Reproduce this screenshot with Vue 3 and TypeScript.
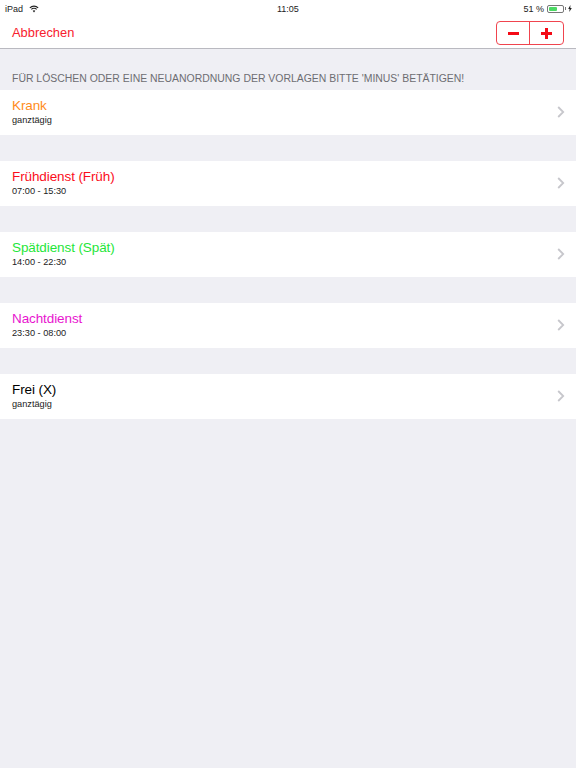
<script setup lang="ts">
interface Template {
  name: string
  time: string
  color: string
}

const templates: Template[] = [
  { name: 'Krank', time: 'ganztägig', color: '#ff8c1a' },
  { name: 'Frühdienst (Früh)', time: '07:00 - 15:30', color: '#fb0d1b' },
  { name: 'Spätdienst (Spät)', time: '14:00 - 22:30', color: '#1fe63a' },
  { name: 'Nachtdienst', time: '23:30 - 08:00', color: '#e815cf' },
  { name: 'Frei (X)', time: 'ganztägig', color: '#000000' },
]
</script>

<template>
  <div class="page">
    <header class="top">
      <div class="status">
        <div class="status-left">
          <span>iPad</span>
          <svg width="10" height="8" viewBox="0 0 12 9">
            <path d="M1 3.2a7 7 0 0 1 10 0" fill="none" stroke="#222" stroke-width="1.3" />
            <path d="M2.8 5a4.4 4.4 0 0 1 6.4 0" fill="none" stroke="#222" stroke-width="1.3" />
            <path d="M6 8.6 4.4 6.7a2.2 2.2 0 0 1 3.2 0z" fill="#222" />
          </svg>
        </div>
        <span class="clock">11:05</span>
        <div class="status-right">
          <span>51 %</span>
          <div class="battery"><div class="battery-fill"></div></div>
          <div class="battery-tip"></div>
          <svg class="bolt" width="4" height="7" viewBox="0 0 4 7">
            <path d="M2.4 0 .2 3.9h1.4L1.3 7l2.5-4.1H2.3z" fill="#222" />
          </svg>
        </div>
      </div>
      <nav class="nav">
        <span class="cancel">Abbrechen</span>
        <div class="stepper">
          <div class="step step-minus">
            <svg width="11" height="3" viewBox="0 0 11 3"><rect width="11" height="3" fill="#f40a16" /></svg>
          </div>
          <div class="step step-plus">
            <svg width="11" height="11" viewBox="0 0 11 11">
              <path d="M4 0h3v4h4v3H7v4H4V7H0V4h4z" fill="#f40a16" />
            </svg>
          </div>
        </div>
      </nav>
    </header>

    <p class="hint">FÜR LÖSCHEN ODER EINE NEUANORDNUNG DER VORLAGEN BITTE 'MINUS' BETÄTIGEN!</p>

    <ul class="list">
      <li v-for="t in templates" :key="t.name + t.time" class="row">
        <div class="row-text">
          <div class="name" :style="{ color: t.color }">{{ t.name }}</div>
          <div class="time">{{ t.time }}</div>
        </div>
        <svg class="chevron" width="8" height="12" viewBox="0 0 8 12">
          <path d="M1.2 1 6.2 6l-5 5" fill="none" stroke="#c7c7cc" stroke-width="1.8" />
        </svg>
      </li>
    </ul>
  </div>
</template>

<style>
html,
body {
  margin: 0;
  background: #efeff4;
}
</style>

<style scoped>
.page {
  height: 768px;
  overflow: hidden;
  background: #efeff4;
  font-family: "Liberation Sans", Arial, sans-serif;
}

.top {
  height: 48px;
  background: #fff;
  border-bottom: 1px solid #b9b9c0;
}

.status {
  height: 15px;
  padding: 1px 4px 0 5px;
  display: flex;
  align-items: center;
  justify-content: space-between;
  position: relative;
  font-size: 9px;
  color: #222;
}

.status-left,
.status-right {
  display: flex;
  align-items: center;
}

.status-left {
  gap: 6px;
}

.clock {
  position: absolute;
  left: 277px;
  font-weight: 500;
}

.status-right span {
  margin-right: 3px;
  font-weight: 500;
}

.battery {
  width: 13px;
  height: 4px;
  padding: 1px;
  border: 1px solid #777;
  border-radius: 2px;
}

.battery-fill {
  width: 8px;
  height: 4px;
  background: #4cd964;
  border-radius: 1px;
}

.battery-tip {
  width: 1px;
  height: 3px;
  margin-left: 1px;
  background: #777;
}

.bolt {
  margin-left: 2px;
}

.nav {
  height: 33px;
  padding: 0 12px;
  display: flex;
  align-items: center;
  justify-content: space-between;
}

.cancel {
  font-size: 12.9px;
  color: #f8202e;
}

.stepper {
  width: 66px;
  height: 22px;
  display: flex;
  margin-top: 1px;
  border: 1px solid #f0444e;
  border-radius: 4px;
}

.step {
  display: flex;
  align-items: center;
  justify-content: center;
}

.step-minus {
  width: 32px;
}

.step-plus {
  flex: 1;
  border-left: 1px solid #f0444e;
}

.hint {
  margin: 0;
  height: 41px;
  padding: 23px 12px 0;
  box-sizing: border-box;
  font-size: 10.45px;
  line-height: 13px;
  color: #6d6d72;
  white-space: nowrap;
}

.list {
  margin: 0;
  padding: 0;
  list-style: none;
}

.row {
  height: 45px;
  margin-bottom: 26px;
  padding: 0 11px 0 12px;
  box-sizing: border-box;
  display: flex;
  align-items: center;
  justify-content: space-between;
  background: #fff;
}

.row-text {
  margin-top: -3px;
}

.name {
  font-size: 13.5px;
  line-height: 17px;
  letter-spacing: -0.1px;
}

.time {
  margin-top: 1px;
  font-size: 9.2px;
  line-height: 11px;
  color: #222;
}

.chevron {
  margin-top: -1px;
}
</style>
